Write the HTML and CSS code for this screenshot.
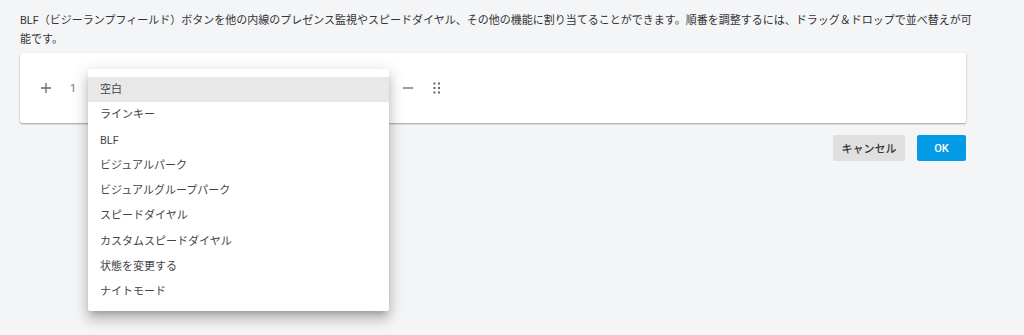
FILE: index.html
```html
<!DOCTYPE html>
<html lang="ja">
<head>
    <meta charset="UTF-8">
    <meta name="viewport" content="width=device-width, initial-scale=1.0">
    <title>BLF</title>
    <link rel="stylesheet" href="styles.css">
</head>
<body>
    <div class="page">
        <p class="intro">BLF（ビジーランプフィールド）ボタンを他の内線のプレゼンス監視やスピードダイヤル、その他の機能に割り当てることができます。順番を調整するには、ドラッグ＆ドロップで並べ替えが可能です。</p>

        <div class="key-card">
            <div class="key-row">
                <span class="icon-btn">
                    <svg width="12" height="12" viewBox="0 0 12 12"><path d="M6 1v10M1 6h10" stroke="#666" stroke-width="1.3"/></svg>
                </span>
                <span class="key-index">1</span>
                <div class="key-select">
                    <ul class="menu">
                        <li class="active">空白</li>
                        <li>ラインキー</li>
                        <li>BLF</li>
                        <li>ビジュアルパーク</li>
                        <li>ビジュアルグループパーク</li>
                        <li>スピードダイヤル</li>
                        <li>カスタムスピードダイヤル</li>
                        <li>状態を変更する</li>
                        <li>ナイトモード</li>
                    </ul>
                </div>
                <span class="icon-btn minus">
                    <svg width="12" height="12" viewBox="0 0 12 12"><path d="M1 6h10" stroke="#666" stroke-width="1.3"/></svg>
                </span>
                <span class="icon-btn drag">
                    <svg width="8" height="12" viewBox="0 0 8 12" fill="#666">
                        <rect x="0.5" y="0.5" width="2" height="2"/><rect x="5" y="0.5" width="2" height="2"/>
                        <rect x="0.5" y="5" width="2" height="2"/><rect x="5" y="5" width="2" height="2"/>
                        <rect x="0.5" y="9.5" width="2" height="2"/><rect x="5" y="9.5" width="2" height="2"/>
                    </svg>
                </span>
            </div>
        </div>

        <div class="actions">
            <button class="btn btn-cancel">キャンセル</button>
            <button class="btn btn-ok">OK</button>
        </div>
    </div>
</body>
</html>
```

FILE: styles.css
```css
html, body {
    height: 100%;
}

body {
    margin: 0;
    padding: 0;
    min-height: 335px;
    background: #f4f5f7;
    font-family: Roboto, "Noto Sans CJK JP", sans-serif;
    color: #333333;
}

.page {
    padding: 11px 58px 0 20px;
    min-height: 320px;
}

.intro {
    margin: 0 -14px 4px 0;
    font-size: 11px;
    line-height: 19px;
    color: #333333;
}

.key-card {
    background: #ffffff;
    height: 70px;
    border-radius: 2px;
    box-shadow: 0 1px 2px rgba(0, 0, 0, 0.35);
    display: flex;
    align-items: center;
    padding: 0 14px;
}

.key-row {
    display: flex;
    align-items: center;
}

.icon-btn {
    width: 24px;
    height: 24px;
    display: flex;
    align-items: center;
    justify-content: center;
}

.key-index {
    width: 30px;
    text-align: center;
    font-size: 11px;
    color: #777777;
}

.key-select {
    position: relative;
    width: 301px;
    height: 24px;
}

.minus {
    margin-left: 7px;
}

.drag {
    margin-left: 5px;
}

.menu {
    position: absolute;
    top: -7px;
    left: 0;
    width: 301px;
    margin: 0;
    padding: 8px 0 7px;
    list-style: none;
    background: #ffffff;
    border-radius: 2px;
    box-shadow: 0 5px 6px -3px rgba(0, 0, 0, 0.2), 0 9px 12px 1px rgba(0, 0, 0, 0.14), 0 3px 16px 2px rgba(0, 0, 0, 0.12);
    z-index: 10;
}

.menu li {
    height: 25.25px;
    line-height: 25px;
    padding-left: 12px;
    font-size: 11px;
    color: #444444;
}

.menu li.active {
    background: #e8e8e8;
}

.actions {
    display: flex;
    justify-content: flex-end;
    gap: 12px;
    margin-top: 12px;
}

.btn {
    height: 26px;
    border: none;
    border-radius: 2px;
    font-family: Roboto, "Noto Sans CJK JP", sans-serif;
    font-size: 11px;
    font-weight: 500;
    cursor: pointer;
    padding: 0;
}

.btn-cancel {
    width: 72px;
    background: #e0e0e0;
    color: #333333;
}

.btn-ok {
    width: 49px;
    background: #039be5;
    color: #ffffff;
}
```
